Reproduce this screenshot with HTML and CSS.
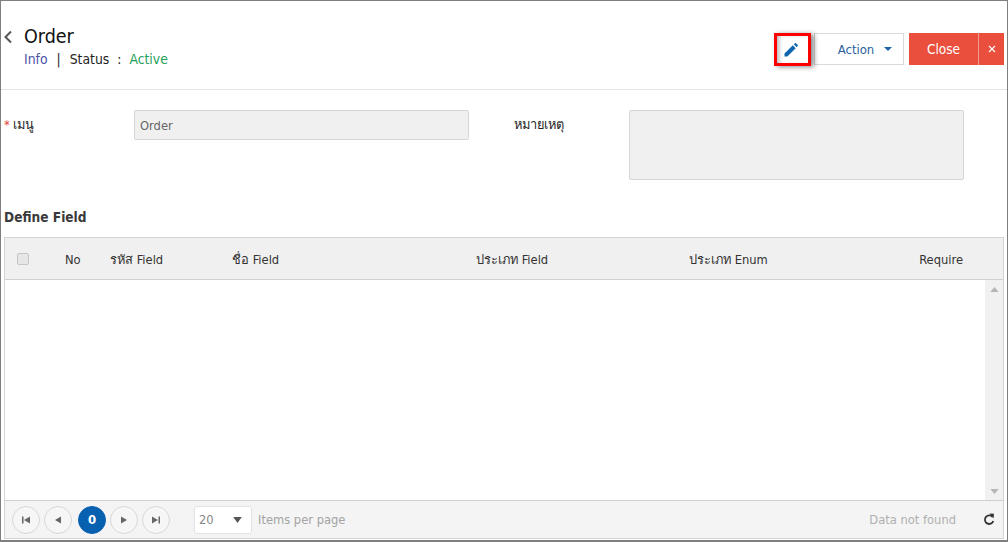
FILE: index.html
```html
<!DOCTYPE html>
<html lang="th">
<head>
<meta charset="utf-8">
<title>Order</title>
<link rel="stylesheet" href="styles.css">
</head>
<body>
<div class="frame">
  <header class="head">
    <svg class="back" width="10" height="14" viewBox="0 0 10 14"><path d="M8 1.5 2.5 7 8 12.5" fill="none" stroke="#555" stroke-width="2"/></svg>
    <div class="titles">
      <div class="title">Order</div>
      <div class="sub"><span class="info">Info</span><span class="sep">|</span><span>Status</span><span class="colon">:</span><span class="active">Active</span></div>
    </div>
    <div class="actions">
      <div class="edit-wrap">
        <button class="edit"><svg width="14" height="14" viewBox="0 0 14 14"><path d="M0.5 13.5V10.6L8.8 2.3 11.7 5.2 3.4 13.5ZM9.8 1.3 11 0.3Q11.6-.1 12.2.4L13.6 1.8Q14.1 2.4 13.7 3L12.7 4.2Z" fill="#0f66b0"/></svg></button>
      </div>
      <button class="action">Action<span class="caret"></span></button>
      <div class="close"><span class="close-main">Close</span><span class="close-x"><svg width="8" height="8" viewBox="0 0 8 8"><path d="M1 1 7 7M7 1 1 7" stroke="#fff" stroke-width="1.1"/></svg></span></div>
    </div>
  </header>
  <section class="form">
    <label class="lab lab1"><span class="req">*</span> เมนู</label>
    <div class="input">Order</div>
    <label class="lab lab2">หมายเหตุ</label>
    <div class="area"></div>
  </section>
  <h2 class="section">Define Field</h2>
  <div class="grid">
    <div class="ghead">
      <span class="check"></span>
      <span class="c-no">No</span>
      <span class="c-code">รหัส Field</span>
      <span class="c-name">ชื่อ Field</span>
      <span class="c-type">ประเภท Field</span>
      <span class="c-enum">ประเภท Enum</span>
      <span class="c-req">Require</span>
    </div>
    <div class="gbody">
      <div class="scroll">
        <svg width="9" height="5" viewBox="0 0 10 6"><path d="M5 0 10 6H0Z" fill="#b5b5b5"/></svg>
        <svg width="9" height="5" viewBox="0 0 10 6"><path d="M0 0H10L5 6Z" fill="#b5b5b5"/></svg>
      </div>
    </div>
    <div class="pager">
      <span class="pg"><svg width="10" height="10" viewBox="0 0 10 10"><path d="M1 1.5H2.5V8.5H1ZM9 1.5V8.5L3 5Z" fill="#666"/></svg></span>
      <span class="pg"><svg width="10" height="10" viewBox="0 0 10 10"><path d="M8 1.5V8.5L2 5Z" fill="#666"/></svg></span>
      <span class="pg cur">0</span>
      <span class="pg"><svg width="10" height="10" viewBox="0 0 10 10"><path d="M2 1.5V8.5L8 5Z" fill="#666"/></svg></span>
      <span class="pg"><svg width="10" height="10" viewBox="0 0 10 10"><path d="M1 1.5V8.5L7 5ZM7.5 1.5H9V8.5H7.5Z" fill="#666"/></svg></span>
      <div class="size"><span>20</span><svg width="9" height="6" viewBox="0 0 10 7"><path d="M0 0H10L5 7Z" fill="#555"/></svg></div>
      <span class="ipp">Items per page</span>
      <span class="nf">Data not found</span>
      <svg class="refresh" width="12" height="13" viewBox="0 0 12 13"><path d="M9.6 4A4.3 4.3 0 1 0 10.3 8" fill="none" stroke="#333" stroke-width="1.8"/><path d="M6.5 0.5 11 0.8 10.5 5.5Z" fill="#333"/></svg>
    </div>
  </div>
</div>
</body>
</html>
```
FILE: styles.css
```css
* { box-sizing: border-box; }
html, body { margin: 0; padding: 0; }
body { width: 1008px; height: 542px; background: #fff; overflow: hidden; font-family: "DejaVu Sans Condensed", "Noto Sans", "Noto Sans CJK SC", sans-serif; font-size: 12.8px; color: #333; }
.frame { width: 1008px; height: 542px; border: 1px solid #7f7f7f; border-bottom-width: 2px; display: flex; flex-direction: column; padding: 0; }
.head { height: 89px; flex: none; border-bottom: 1px solid #e4e4e4; display: flex; padding: 26px 3px 0 3px; }
.back { margin-top: 3px; margin-left: -1px; flex: none; }
.titles { margin-left: 11px; }
.title { font-size: 19.5px; line-height: 20px; color: #111; }
.sub { margin-top: 3px; font-size: 13.8px; line-height: 18px; color: #222; display: flex; }
.info { color: #4a52a8; }
.sep { margin: 0 9px; }
.colon { margin: 0 8px; }
.active { color: #27a05a; }
.actions { margin-left: auto; display: flex; align-items: flex-start; padding-top: 6px; }
.edit-wrap { width: 37px; height: 33px; border: 3px solid #f00; box-shadow: 3px 1px 5px rgba(0,0,0,.45); background: #fff; margin-right: 4px; z-index: 1; }
.edit { width: 100%; height: 100%; border: 0; background: #fff; box-shadow: inset 4px 0 4px -2px rgba(0,0,0,.3); padding: 0 3px 0 0; display: flex; align-items: center; justify-content: center; }
.action { width: 90px; height: 32px; border: 1px solid #d9d9d9; background: #fff; color: #2a5f9e; font: inherit; font-size: 13px; padding: 0 0 0 12px; display: flex; align-items: center; justify-content: center; margin-left: -1px; }
.caret { width: 0; height: 0; border: 4.5px solid transparent; border-top: 4.5px solid #1e63ad; border-bottom: 0; margin-left: 10px; }
.close { margin-left: 5px; width: 95px; height: 32px; background: #ea4f3e; color: #fff; display: flex; font-size: 13.5px; }
.close-main { width: 69px; display: flex; align-items: center; justify-content: center; }
.close-x { flex: 1; border-left: 1px solid #f19a8f; display: flex; align-items: center; justify-content: center; }
.form { height: 117px; flex: none; position: relative; display: grid; grid-template-columns: 130px 335px 160px 335px; padding: 20px 0 0 3px; }
.lab { line-height: 30px; color: #222; }
.lab2 { padding-left: 45px; }
.req { color: #e8413a; }
.input, .area { background: #f0f0f0; border: 1px solid #d6d6d6; border-radius: 2px; color: #666; }
.input { height: 30px; line-height: 29px; padding-left: 5px; }
.area { height: 70px; }
.section { margin: 0 0 0 3px; font-size: 13.6px; line-height: 20px; font-weight: 700; color: #3a3a3a; }
.grid { margin: 10px 3px 1px 3px; flex: 1; border: 1px solid #d4d4d4; display: flex; flex-direction: column; min-height: 0; }
.ghead { height: 42px; flex: none; background: #f0f0f0; border-bottom: 1px solid #d0d0d0; display: grid; grid-template-columns: 39px 54px 122px 244px 213px 1fr auto; align-items: center; color: #333; padding: 2px 40px 0 12px; }
.check { width: 12px; height: 12px; border: 1px solid #c6c6c6; background: #e6e6e6; border-radius: 2px; margin-top: -2px; }
.c-no { padding-left: 9px; }
.c-req { white-space: nowrap; }
.gbody { flex: 1; display: flex; justify-content: flex-end; min-height: 0; }
.scroll { width: 18px; background: #f1f1f1; display: flex; flex-direction: column; align-items: center; justify-content: space-between; padding: 7px 0 6px; }
.pager { height: 38px; flex: none; background: #f4f4f4; border-top: 1px solid #cfcfcf; display: flex; align-items: center; padding: 0 7px; }
.pg { width: 28px; height: 28px; border: 1px solid #d8d8d8; border-radius: 50%; background: #f6f6f6; display: flex; align-items: center; justify-content: center; margin-right: 4px; flex: none; }
.pg.cur { background: #0861b0; border-color: #0861b0; color: #fff; font-weight: 700; font-size: 13px; margin-left: 2px; }
.size { width: 58px; height: 28px; margin-left: 20px; border: 1px solid #e2e2e2; border-radius: 3px; background: #fff; display: flex; align-items: center; justify-content: space-between; padding: 0 9px 0 4px; color: #888; }
.ipp { margin-left: 6px; color: #a3a3a3; }
.nf { margin-left: auto; color: #b0b0b0; }
.refresh { margin-left: 27px; margin-right: 1px; }
```
